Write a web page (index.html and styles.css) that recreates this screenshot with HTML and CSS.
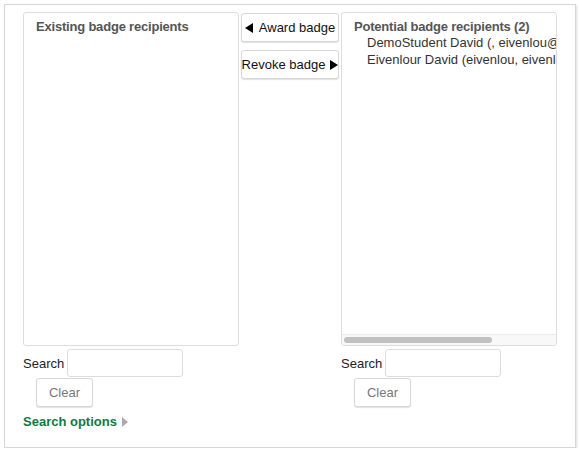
FILE: index.html
```html
<!DOCTYPE html>
<html>
<head>
<meta charset="utf-8">
<link rel="stylesheet" href="styles.css">
</head>
<body>
<div class="frame">
  <div class="row">
    <div class="col">
      <div class="listbox">
        <div class="group">Existing badge recipients</div>
      </div>
      <div class="search">
        <span class="label">Search</span>
        <span class="input"></span>
      </div>
      <div class="btn clear">Clear</div>
      <div class="options">Search options <span class="tri"></span></div>
    </div>
    <div class="actions">
      <div class="btn action"><span class="arr left"></span>Award badge</div>
      <div class="btn action">Revoke badge<span class="arr right"></span></div>
    </div>
    <div class="col">
      <div class="listbox scroll">
        <div class="content">
          <div class="group">Potential badge recipients (2)</div>
          <div class="opt">DemoStudent David (, eivenlou@uwa.edu.au)</div>
          <div class="opt">Eivenlour David (eivenlou, eivenlou@uwa.edu.au)</div>
        </div>
        <div class="hbar"><div class="thumb"></div></div>
      </div>
      <div class="search">
        <span class="label">Search</span>
        <span class="input"></span>
      </div>
      <div class="btn clear">Clear</div>
    </div>
  </div>
</div>
</body>
</html>
```
FILE: styles.css
```css
html, body { margin: 0; padding: 0; background: #fff; }
body { font-family: "Liberation Sans", Arial, sans-serif; font-size: 13px; color: #222; }
.frame {
  margin: 4px 0 0 4px;
  width: 572px;
  height: 444px;
  border: 1px solid #d6d6d6;
  box-shadow: 1px 1px 2px rgba(0,0,0,0.12);
  box-sizing: border-box;
  padding: 7px 0 0 18px;
}
.row { display: flex; gap: 2px; align-items: flex-start; }
.col { width: 216px; display: flex; flex-direction: column; align-items: flex-start; }
.listbox {
  width: 216px; height: 334px; box-sizing: border-box;
  border: 1px solid #ddd; border-radius: 3px; overflow: hidden;
  display: flex; flex-direction: column;
}
.content { flex: 1; overflow: hidden; white-space: nowrap; }
.group { font-weight: bold; color: #555; padding: 6px 0 0 12px; line-height: 15px; letter-spacing: -0.2px; }
.opt { padding-left: 25px; color: #333; line-height: 17px; }
.hbar { height: 10px; background: #f8f8f8; border-top: 1px solid #ececec; position: relative; }
.thumb { position: absolute; left: 2px; top: 2px; width: 148px; height: 6px; border-radius: 3px; background: #c1c1c1; }
.search { display: flex; align-items: center; gap: 3px; margin-top: 3px; }
.label { color: #222; }
.input { width: 116px; height: 28px; box-sizing: border-box; border: 1px solid #ddd; border-radius: 3px; }
.btn {
  box-sizing: border-box; border: 1px solid #d8d8d8; border-radius: 3px;
  box-shadow: 0 1px 1px rgba(0,0,0,0.12); background: #fff;
  display: flex; align-items: center; justify-content: center;
}
.clear { width: 57px; height: 29px; margin: 1px 0 0 13px; color: #777; }
.options { margin-top: 7px; color: #0e7a42; font-weight: bold; display: flex; align-items: center; gap: 5px; }
.tri { width: 0; height: 0; border-left: 6px solid #aaa; border-top: 5px solid transparent; border-bottom: 5px solid transparent; }
.actions { width: 98px; display: flex; flex-direction: column; gap: 8px; padding-top: 1px; }
.action { width: 98px; height: 29px; color: #111; white-space: nowrap; }
.arr { width: 0; height: 0; border-top: 5px solid transparent; border-bottom: 5px solid transparent; }
.arr.left { border-right: 8px solid #000; margin-right: 6px; }
.arr.right { border-left: 8px solid #000; margin-left: 5px; }
```
